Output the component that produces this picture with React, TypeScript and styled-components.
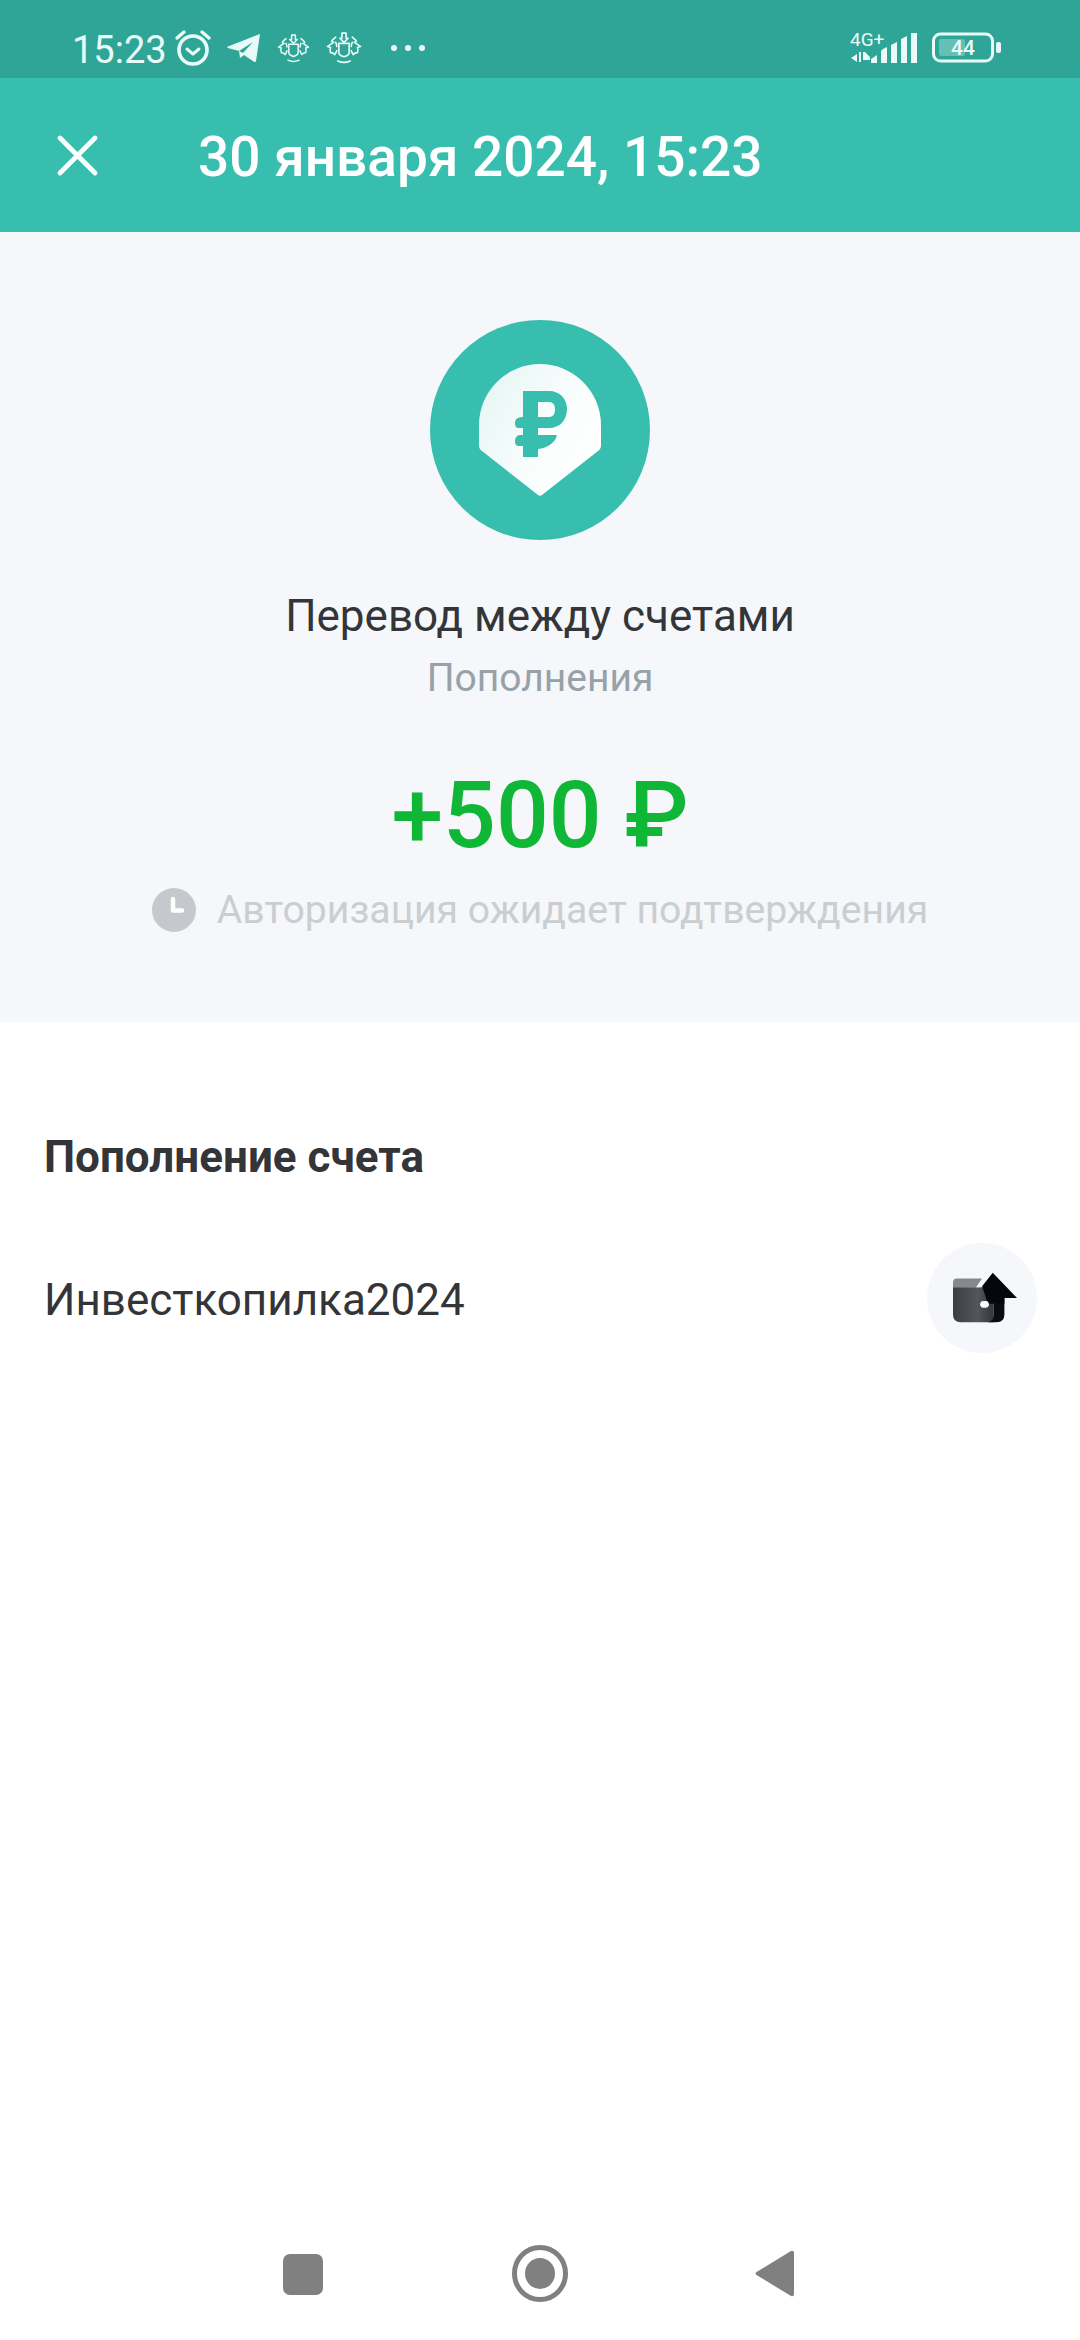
import React from "react";
import styled, { createGlobalStyle } from "styled-components";

const Global = createGlobalStyle`
  html, body { margin: 0; padding: 0; background: #fff; }
  body { font-family: Roboto, "Liberation Sans", sans-serif; }
  * { box-sizing: border-box; }
`;
const Page = styled.div`
  width: 1080px; height: 2340px; display: flex; flex-direction: column; background: #fff; overflow: hidden;
`;
const StatusBar = styled.div`
  height: 78px; flex: none; background: #2fa597; color: #e9fbf8; display: flex; align-items: center;
  padding: 17px 78px 0 72px; justify-content: space-between;
`;
const StatusLeft = styled.div`display: flex; align-items: center;`;
const StatusTime = styled.span`font-size: 38px; line-height: 44px; margin-right: 6px; position: relative; top: 2px;`;
const StatusIcon = styled.svg<{ $ml?: number }>`display: block; flex: none; overflow: visible; margin-left: ${p => p.$ml ?? 0}px;`;
const StatusRight = styled.div`display: flex; align-items: center; gap: 15px;`;
const Header = styled.div`
  height: 154px; flex: none; background: #38beae; display: flex; align-items: center; padding-left: 56px;
`;
const HeaderTitle = styled.h1`
  margin: 4px 0 0 99px; font-size: 55px; line-height: 60px; font-weight: 500; color: #fff; white-space: nowrap;
`;
const Hero = styled.section`
  height: 790px; flex: none; background: #f5f7fa; display: flex; flex-direction: column; align-items: center; padding-top: 88px;
`;
const HeroName = styled.div`font-size: 44px; line-height: 50px; color: #333538; margin-top: 51px;`;
const HeroCategory = styled.div`font-size: 39px; line-height: 46px; color: #98a1a8; margin-top: 14px;`;
const Amount = styled.div`font-size: 93px; line-height: 104px; font-weight: 500; color: #10b636; margin-top: 63px;`;
const PendingRow = styled.div`display: flex; align-items: center; gap: 21px; margin-top: 19px;`;
const PendingText = styled.span`font-size: 39.2px; line-height: 46px; color: #cbced1; white-space: nowrap;`;
const Details = styled.section`flex: 1; padding: 110px 43px 0 44px; display: flex; flex-direction: column;`;
const SectionTitle = styled.h2`margin: 0; font-size: 44px; line-height: 50px; font-weight: 700; color: #333538;`;
const AccountRow = styled.div`display: flex; align-items: center; justify-content: space-between; margin-top: 61px;`;
const AccountName = styled.span`font-size: 44px; line-height: 50px; padding-top: 3px; color: #333538;`;
const AccountBadge = styled.div`
  width: 110px; height: 110px; border-radius: 50%; background: #f5f7fa; display: flex; align-items: center; justify-content: center;
`;
const NavBar = styled.nav`
  flex: none; height: 130px; display: flex; align-items: flex-start; padding: 35px 0 0 283px;
`;
const NavIcon = styled.svg<{ $ml?: number; $mt?: number }>`
  display: block; flex: none; margin-left: ${p => p.$ml ?? 0}px; margin-top: ${p => p.$mt ?? 0}px;
`;

const Crest = ({ w, h, ml }: { w: number; h: number; ml: number }) => (
  <StatusIcon $ml={ml} width={w} height={h} viewBox="0 0 34 32" fill="none" stroke="#e9fbf8" strokeWidth="1.600" strokeLinejoin="round" strokeLinecap="round">
    <path d="M12 12h10v9c0 2-2 3-5 4-3-1-5-2-5-4z" />
    <path d="M15 7V2h4v5h2l-4 4-4-4z" />
    <path d="M9 6c-2 2-3 2-4 4l2 1c-2 1-4 3-6 4l3 1c-1 2-1 3 0 5 2 0 3 0 4 2 1-2 2-3 2-4" />
    <path d="M25 6c2 2 3 2 4 4l-2 1c2 1 4 3 6 4l-3 1c1 2 1 3 0 5-2 0-3 0-4 2-1-2-2-3-2-4" />
    <path d="M9 11c1 2 1 3 1 4M25 11c-1 2-1 3-1 4M11 29c4 2 8 2 12 0" />
  </StatusIcon>
);

export default function App() {
  return (
    <Page>
      <Global />
      <StatusBar>
        <StatusLeft>
          <StatusTime>15:23</StatusTime>
          <StatusIcon width="40" height="38" viewBox="0 0 40 38" fill="none" stroke="#e9fbf8">
            <circle cx="20" cy="21" r="14" strokeWidth="3.600" />
            <path d="M14 20l6 5 6-5" strokeWidth="3" strokeLinecap="round" strokeLinejoin="round" />
            <path d="M4 9l7-6M36 9l-7-6" strokeWidth="3.400" strokeLinecap="round" />
          </StatusIcon>
          <StatusIcon $ml={13} width="36" height="30" viewBox="0 0 34 30">
            <path d="M33 1L29 28c-.2 1-1 1.300-2 .8L17 22l-4 3-1-7L1 15c-1-.5-1-1.200 0-1.600z" fill="#e9fbf8" />
            <path d="M12 18L26 9 16 20z" fill="#2fa597" />
          </StatusIcon>
          <Crest w={33} h={30} ml={15} />
          <Crest w={36} h={33} ml={16} />
          <StatusIcon $ml={28} width="36" height="8" viewBox="0 0 36 8" fill="#e9fbf8">
            <circle cx="4" cy="4" r="3" />
            <circle cx="18" cy="4" r="3" />
            <circle cx="32" cy="4" r="3" />
          </StatusIcon>
        </StatusLeft>
        <StatusRight>
          <StatusIcon width="67" height="32" viewBox="0 0 67 32">
            <text x="0" y="14" fontFamily="Roboto" fontSize="19" fill="#e9fbf8">4G+</text>
            <path d="M1 26l6-4v8zM9 20h2v10H9zM13 20h2l5 5v3h-7z" fill="#e9fbf8" />
            <path d="M21 31v-4l6-4v8zM31 31V20q0-2 2-3l4-2v16zM41 31V13l6-3v21zM51 31V7l6-3v27zM61 31V1h6v30z" fill="#e9fbf8" />
          </StatusIcon>
          <StatusIcon width="70" height="32" viewBox="0 0 70 32">
            <rect x="1.500" y="2" width="59" height="27" rx="7" fill="none" stroke="#e9fbf8" strokeWidth="3" />
            <rect x="7" y="7" width="26" height="17" rx="2" fill="#e9fbf8" opacity="0.3" />
            <text x="31" y="23" textAnchor="middle" fontFamily="Roboto" fontWeight="500" fontSize="21" fill="#e9fbf8">44</text>
            <rect x="64" y="10" width="5" height="11" rx="2" fill="#e9fbf8" />
          </StatusIcon>
        </StatusRight>
      </StatusBar>
      <Header>
        <StatusIcon width="43" height="43" viewBox="0 0 43 43" fill="none" stroke="#fff" strokeWidth="4.800" strokeLinecap="round">
          <path d="M4 4l35 35M39 4L4 39" />
        </StatusIcon>
        <HeaderTitle>30 января 2024, 15:23</HeaderTitle>
      </Header>
      <Hero>
        <svg width="220" height="220" viewBox="0 0 220 220" style={{ display: "block", flex: "none" }}>
          <defs>
            <linearGradient id="pin" x1="0" y1="0" x2="1" y2="0.6">
              <stop offset="0" stopColor="#e4f5f3" />
              <stop offset="0.6" stopColor="#f7fdfc" />
              <stop offset="1" stopColor="#ffffff" />
            </linearGradient>
          </defs>
          <circle cx="110" cy="110" r="110" fill="#38beae" />
          <path d="M49 105a61 61 0 0 1 122 0v20q0 4-3 6l-56 44q-2 1.500-4 0l-56-44q-3-2-3-6z" fill="url(#pin)" />
          <path fillRule="evenodd" fill="#38beae" d="M93 71H119C130 71 137 79 137 89C137 100 130 108 119 108H108V115H127C125 124 116 128 108 129V137H93V126H89C86 126 85 124 85 121C85 118 87 115 90 115H93V108H89C86 108 85 106 85 103C85 99 88 97 93 97ZM108 82V97H119C124 97 125 93 125 89C125 85 123 82 119 82Z" />
        </svg>
        <HeroName>Перевод между счетами</HeroName>
        <HeroCategory>Пополнения</HeroCategory>
        <Amount>+500 ₽</Amount>
        <PendingRow>
          <svg width="44" height="44" viewBox="0 0 44 44" style={{ display: "block", flex: "none" }}>
            <circle cx="22" cy="22" r="22" fill="#c5c9cd" />
            <path d="M21 11v11.500h9" fill="none" stroke="#fff" strokeWidth="4.500" strokeLinecap="round" strokeLinejoin="round" />
          </svg>
          <PendingText>Авторизация ожидает подтверждения</PendingText>
        </PendingRow>
      </Hero>
      <Details>
        <SectionTitle>Пополнение счета</SectionTitle>
        <AccountRow>
          <AccountName>Инвесткопилка2024</AccountName>
          <AccountBadge>
            <svg width="64" height="52" viewBox="0 0 66 52" style={{ display: "block", marginLeft: 6 }}>
              <defs>
                <linearGradient id="wal" x1="0" y1="0" x2="1" y2="0">
                  <stop offset="0" stopColor="#3a3d42" />
                  <stop offset="0.6" stopColor="#53565b" />
                  <stop offset="1" stopColor="#33363b" />
                </linearGradient>
              </defs>
              <path d="M4 6h26l-6 9H0v-5q0-4 4-4z" fill="#85888c" />
              <path d="M0 15h42v36H8q-8 0-8-8z" fill="url(#wal)" />
              <path d="M42 17h11v26q0 8-8 8h-9q6-1 6-8z" fill="#0a0c12" />
              <path d="M41 0L66 26H53v6H36L30 14z" fill="#05070d" />
              <path d="M24 15l7-10 2 2-5 8z" fill="#f5f7fa" />
              <rect x="28" y="29" width="9" height="7" rx="3.500" fill="#fff" />
            </svg>
          </AccountBadge>
        </AccountRow>
      </Details>
      <NavBar>
        <NavIcon $mt={9} width="40" height="41" viewBox="0 0 40 41">
          <rect width="40" height="41" rx="7" fill="#808080" />
        </NavIcon>
        <NavIcon $ml={189} width="56" height="57" viewBox="0 0 56 57">
          <ellipse cx="28" cy="28.500" rx="25.500" ry="26" fill="none" stroke="#808080" strokeWidth="5" />
          <ellipse cx="28" cy="28.500" rx="15" ry="15.500" fill="#808080" />
        </NavIcon>
        <NavIcon $ml={187} $mt={5} width="39" height="47" viewBox="0 0 39 47">
          <path d="M36 1L1.500 22q-2 1.500 0 3L36 46q3 1 3-2V3q0-3-3-2z" fill="#808080" />
        </NavIcon>
      </NavBar>
    </Page>
  );
}
